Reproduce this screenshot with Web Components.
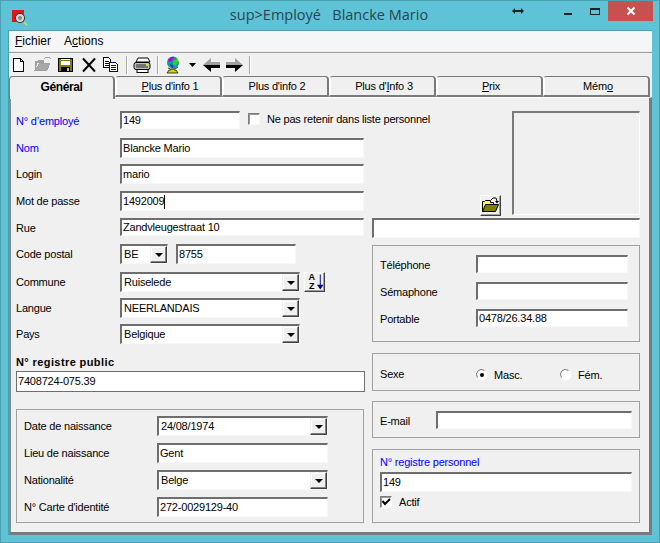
<!DOCTYPE html>
<html>
<head>
<meta charset="utf-8">
<title>sup>Employé</title>
<style>
  html, body { margin: 0; padding: 0; background: #5fc3d8; }
  body { width: 660px; height: 543px; overflow: hidden; font: 11px "Liberation Sans", Arial, sans-serif; letter-spacing: -0.2px; color: #000; }
</style>
</head>
<body>
<emp-window title-text="sup>Employé   Blancke Mario">
  <menu-bar></menu-bar>
  <tool-bar></tool-bar>
  <tab-strip></tab-strip>
  <form-page>
    <div slot="left" class="grid">
      <form-row label="N° d’employé" blue><win-edit w="120" h="18" value="149"></win-edit><win-check label="Ne pas retenir dans liste personnel"></win-check></form-row>
      <form-row label="Nom" blue><win-edit w="244" value="Blancke Mario"></win-edit></form-row>
      <form-row label="Login"><win-edit w="244" value="mario"></win-edit></form-row>
      <form-row label="Mot de passe"><win-edit w="244" value="1492009" caret></win-edit></form-row>
      <form-row label="Rue"><win-edit w="244" h="18" value="Zandvleugestraat 10"></win-edit></form-row>
      <form-row label="Code postal"><win-combo w="48" value="BE"></win-combo><win-edit w="120" value="8755"></win-edit></form-row>
      <form-row label="Commune"><win-combo w="180" value="Ruiselede"></win-combo><sort-button></sort-button></form-row>
      <form-row label="Langue"><win-combo w="180" value="NEERLANDAIS"></win-combo></form-row>
      <form-row label="Pays"><win-combo w="180" value="Belgique"></win-combo></form-row>
    </div>
    <public-number slot="left" label="N° registre public" value="7408724-075.39"></public-number>
    <group-box slot="left" class="birth" pad="6px 0 6px 7px">
      <form-row label="Date de naissance" lw="133" wide><win-combo w="171" value="24/08/1974"></win-combo></form-row>
      <form-row label="Lieu de naissance" lw="133" wide><win-edit w="171" value="Gent"></win-edit></form-row>
      <form-row label="Nationalité" lw="133" wide><win-combo w="171" value="Belge"></win-combo></form-row>
      <form-row label="N° Carte d'identité" lw="133" wide><win-edit w="171" value="272-0029129-40"></win-edit></form-row>
    </group-box>

    <photo-box slot="right"></photo-box>
    <win-edit slot="right" w="268" h="20"></win-edit>
    <group-box slot="right" pad="9px 0 0 7px" h="97" top="7">
      <form-row label="Téléphone" lw="96" wide><win-edit w="152" h="18"></win-edit></form-row>
      <form-row label="Sémaphone" lw="96" wide><win-edit w="152" h="18"></win-edit></form-row>
      <form-row label="Portable" lw="96" wide><win-edit w="152" h="18" value="0478/26.34.88"></win-edit></form-row>
    </group-box>
    <group-box slot="right" pad="10px 0 0 7px" h="38" top="11">
      <form-row label="Sexe" lw="96" wide><win-radio label="Masc." checked></win-radio><win-radio label="Fém."></win-radio></form-row>
    </group-box>
    <group-box slot="right" pad="9px 0 0 7px" h="37" top="10">
      <form-row label="E-mail" lw="56" wide><win-edit w="196" h="18"></win-edit></form-row>
    </group-box>
    <group-box slot="right" pad="6px 0 0 7px" h="74" top="11">
      <staff-number label="N° registre personnel" value="149"></staff-number>
    </group-box>
  </form-page>
</emp-window>

<script>
// small helper, every element just sets its shadow html once
class Base extends HTMLElement {
  render(html) {
    const root = this.attachShadow({ mode: "open" });
    const template = document.createElement("template");
    template.innerHTML = html;
    root.appendChild(template.content.cloneNode(true));
  }
}

class EmpWindow extends Base {
  connectedCallback() {
    this.render(`
      <style>
        :host { display: block; width: 660px; height: 543px; box-sizing: border-box; border: 1px solid #4d9fb2; background: #5fc3d8; }
        .title { height: 29px; display: flex; align-items: flex-start; position: relative; }
        .icon { margin: 9px 0 0 11px; width: 16px; height: 16px; }
        .text { position: absolute; left: 0; right: 0; top: 4px; text-align: center; font: 14.5px "Open Sans", "Noto Sans", sans-serif; letter-spacing: 0; color: #2a4450; white-space: pre; padding-right: 2px; }
        .cursor { position: absolute; left: 511px; top: 5px; }
        .caps { margin-left: auto; margin-right: 6px; display: flex; }
        .caps svg { display: block; }
        .close { width: 45px; height: 20px; background: #c75050; display: flex; align-items: center; justify-content: center; }
        .client { margin: 0 7px; height: 505px; box-sizing: border-box; background: #f0f0f0; display: flex; flex-direction: column; border-top: 1px solid #4d9fb2; border-left: 1px solid #4d9fb2; }
      </style>
      <div class="title">
        <svg class="icon" viewBox="0 0 16 16" shape-rendering="crispEdges">
          <rect x="0" y="0" width="12" height="12" fill="#e01818"/>
          <circle cx="8" cy="8" r="4.6" fill="#d8d8d8" stroke="#333" shape-rendering="auto"/>
          <circle cx="8" cy="8" r="2" fill="#888" shape-rendering="auto"/>
          <path d="M12 12l3 3" stroke="#dddd44" stroke-width="1.5" shape-rendering="auto"/>
        </svg>
        <div class="text">${this.getAttribute("title-text")}</div>
        <svg class="cursor" width="12" height="10" viewBox="0 0 12 10">
          <path d="M0 5l3-3v2h6V2l3 3-3 3V6H3v2z" fill="#222"/>
        </svg>
        <div class="caps">
          <svg width="45" height="20" shape-rendering="crispEdges">
            <rect x="1" y="12" width="8" height="2" fill="#222"/>
            <rect x="27.5" y="7.500" width="9" height="6" fill="none" stroke="#222"/>
            <rect x="27" y="7" width="10" height="2" fill="#222"/>
          </svg>
          <div class="close">
            <svg width="10" height="10" viewBox="0 0 10 10"><path d="M1.500 1.500l7 7M8.500 1.500l-7 7" stroke="#fff" stroke-width="2"/></svg>
          </div>
        </div>
      </div>
      <div class="client"><slot></slot></div>
    `);
  }
}

class MenuBar extends Base {
  connectedCallback() {
    this.render(`
      <style>
        :host { display: flex; height: 20px; padding: 0 0 0 6px; gap: 13px; background: #f5f6f7; align-items: center; font: 12px "Liberation Sans", sans-serif; letter-spacing: 0; border-bottom: 1px solid #e8e8e8; box-shadow: 0 1px 0 #a0a0a0; margin-bottom: 1px; }
        u { text-decoration-thickness: 1px; text-underline-offset: 1px; }
      </style>
      <span><u>F</u>ichier</span><span>A<u>c</u>tions</span>
    `);
  }
}

class ToolBar extends Base {
  connectedCallback() {
    this.render(`
      <style>
        :host { display: block; height: 23px; background: #f0f0f0; }
        svg { display: block; }
      </style>
      <svg width="244" height="23" viewBox="0 0 244 23" shape-rendering="crispEdges">
        <!-- new -->
        <path d="M4.500 5.500h7l3 3v10h-10z" fill="#fff" stroke="#000"/><path d="M11.500 5.500v3h3" fill="none" stroke="#000"/>
        <!-- open, disabled -->
        <path d="M26 17v-9h3l1-1h4v2h-6l-2 8h12l3-7H30" fill="#a8a8a8" stroke="#a0a0a0"/>
        <path d="M35 6l2-2h3l2 2" fill="none" stroke="#a0a0a0"/>
        <!-- save -->
        <rect x="49.500" y="5.500" width="14" height="13" fill="#808000" stroke="#000"/>
        <rect x="52" y="6" width="9" height="6" fill="#fff"/><rect x="52" y="7" width="9" height="1" fill="#808000"/>
        <rect x="52" y="14" width="9" height="4" fill="#000"/><rect x="58" y="15" width="2" height="3" fill="#c0c0c0"/>
        <!-- delete -->
        <path d="M74 5.500l12 13M86 5.500l-12 13" stroke="#000" stroke-width="2" shape-rendering="auto"/>
        <!-- copy -->
        <g transform="translate(-1 0)">
          <path d="M95.500 4.500h5l2 2v8h-7z" fill="#fff" stroke="#000"/>
          <path d="M97 8h4M97 10h4M97 12h4" stroke="#000"/>
          <path d="M101.500 9.500h6l2 2v7h-8z" fill="#fff" stroke="#000080"/>
          <path d="M103 12h5M103 14h5M103 16h5" stroke="#000080"/>
        </g>
        <!-- sep -->
        <rect x="117" y="3" width="1" height="18" fill="#a8a8a8"/><rect x="118" y="3" width="1" height="18" fill="#fff"/>
        <!-- print -->
        <g shape-rendering="auto" transform="translate(-1 0)">
          <path d="M130 5h10l2 4h-14z" fill="#fff" stroke="#000"/>
          <rect x="126" y="9.500" width="16" height="7" rx="2" fill="#c0c0c0" stroke="#000"/>
          <path d="M128 12h10M128 14h12" stroke="#000" stroke-width=".8"/>
          <rect x="129" y="16.500" width="11" height="3" fill="#fff" stroke="#000"/>
          <rect x="138" y="11" width="2" height="1.500" fill="#e8e800"/>
        </g>
        <!-- sep -->
        <rect x="148" y="3" width="1" height="18" fill="#a8a8a8"/><rect x="149" y="3" width="1" height="18" fill="#fff"/>
        <!-- globe -->
        <g shape-rendering="auto" transform="translate(-3 0)">
          <path d="M161 20h11l-2-3h-7z" fill="#e0d000" stroke="#000" stroke-width=".7"/>
          <rect x="165" y="15" width="3" height="3" fill="#e8e000"/>
          <circle cx="167" cy="9.500" r="6" fill="#00a0a0"/>
          <path d="M162 7q3-4 6-3l-2 4-3 1z" fill="#c000c0"/>
          <path d="M167 8l4-2 1 4-3 3-2-2z" fill="#30d030"/>
          <path d="M164 11l3 1 0 3-2-1z" fill="#3030e0"/>
          <path d="M171 5l2 4" stroke="#e8e000" stroke-width="1"/>
          <path d="M162 15q5 3 10-1" fill="none" stroke="#000" stroke-width=".8"/>
        </g>
        <path d="M180 10h7l-3.500 4z" fill="#000" shape-rendering="auto"/>
        <!-- back -->
        <path d="M194 12l8-7v4h9v3z" fill="#a0a0a0" shape-rendering="auto"/>
        <path d="M194 12l8 7v-4h9v-3z" fill="#000" shape-rendering="auto"/>
        <!-- forward -->
        <path d="M234 12l-8-7v4h-9v3z" fill="#a0a0a0" shape-rendering="auto"/>
        <path d="M234 12l-8 7v-4h-9v-3z" fill="#000" shape-rendering="auto"/>
        <!-- sep -->
        <rect x="240" y="3" width="1" height="18" fill="#a8a8a8"/><rect x="241" y="3" width="1" height="18" fill="#fff"/>
      </svg>
    `);
  }
}

class TabStrip extends Base {
  connectedCallback() {
    this.render(`
      <style>
        :host { display: flex; height: 21px; position: relative; z-index: 1; }
        .tab { width: 107px; box-sizing: border-box; height: 21px; padding-left: 4px; background: #f0f0f0; border: 1px solid #7a7a7a; border-width: 1px 2px 2px 1px; border-left-color: #fff; border-radius: 4px 4px 0 0; text-align: center; line-height: 18px; box-shadow: inset 1px 0 0 #fff; }
        .tab.on { width: 106px; height: 23px; padding-left: 0; font-size: 12px; letter-spacing: -0.4px; font-weight: bold; border-bottom: 0; border-left: 1px solid #7a7a7a; line-height: 20px; position: relative; z-index: 2; }
        u { text-underline-offset: 1px; }
      </style>
      <div class="tab on">Général</div>
      <div class="tab"><u>P</u>lus d'info 1</div>
      <div class="tab">Plus d'info 2</div>
      <div class="tab">Plus d'<u>I</u>nfo 3</div>
      <div class="tab"><u>P</u>rix</div>
      <div class="tab">Mém<u>o</u></div>
    `);
  }
}

class FormPage extends Base {
  connectedCallback() {
    this.render(`
      <style>
        :host { display: flex; flex: 1; box-sizing: border-box; gap: 8px; padding: 13px 0 0 5px; background: #f0f0f0; border-top: 1px solid #fff; border-right: 3px solid #7a7a7a; border-bottom: 3px solid #7a7a7a; border-left: 2px solid #8a8a8a; }
        .col { display: flex; flex-direction: column; width: 348px; }
        .col.r { width: 268px; }
        ::slotted(.grid) { display: grid; grid-template-rows: 27px 26px 27px 27px 26px 28px 26px 26px 26px; }
        ::slotted(.birth) { margin-top: 17px; height: 114px; }
      </style>
      <div class="col"><slot name="left"></slot></div>
      <div class="col r"><slot name="right"></slot></div>
    `);
  }
}

class FormRow extends Base {
  connectedCallback() {
    const wide = this.hasAttribute("wide");
    const lw = this.getAttribute("lw") || 104;
    const blue = this.hasAttribute("blue");
    this.render(`
      <style>
        :host { display: flex; align-items: flex-start; gap: ${wide ? 0 : 8}px; ${wide ? "height:27px;" : ""} }
        .label { width: ${lw}px; flex: none; padding-top: 4px; color: ${blue ? "#0000ff" : "#000"}; white-space: nowrap; margin-right: ${wide ? 0 : -8}px; }
      </style>
      <div class="label">${this.getAttribute("label")}</div>
      <slot></slot>
    `);
  }
}

class WinEdit extends Base {
  connectedCallback() {
    const w = this.getAttribute("w");
    const h = this.getAttribute("h") || 20;
    const value = this.getAttribute("value") || "";
    this.render(`
      <style>
        :host { display: block; flex: none; width: ${w}px; height: ${h}px; box-sizing: border-box; background: #fff; border: 2px solid #6e6e6e; border-right: 1px solid #f8f8f8; border-bottom: 1px solid #f8f8f8; padding: 0 0 0 1px; line-height: ${h - 4}px; white-space: nowrap; }
        i { display: inline-block; width: 1px; height: 14px; background: #000; vertical-align: middle; }
      </style>
      ${value}${this.hasAttribute("caret") ? "<i></i>" : ""}
    `);
  }
}

class WinCombo extends Base {
  connectedCallback() {
    this.render(`
      <style>
        :host { display: flex; flex: none; width: ${this.getAttribute("w")}px; height: 20px; box-sizing: border-box; background: #fff; border: 2px solid #6e6e6e; border-right: 1px solid #f8f8f8; border-bottom: 1px solid #f8f8f8; }
        .v { flex: 1; padding-left: 2px; line-height: 17px; white-space: nowrap; }
        .b { width: 17px; height: 17px; box-sizing: border-box; background: #f0f0f0; border: 1px solid; border-color: #f0f0f0 #404040 #404040 #f0f0f0; box-shadow: inset -1px -1px 0 #808080, inset 1px 1px 0 #fff; display: flex; align-items: center; justify-content: center; }
        .b span { width: 0; height: 0; border: 4px solid transparent; border-top-color: #000; border-bottom: 0; margin-top: 1px; }
      </style>
      <div class="v">${this.getAttribute("value")}</div>
      <div class="b"><span></span></div>
    `);
  }
}

class WinCheck extends Base {
  connectedCallback() {
    this.render(`
      <style>
        :host { display: inline-flex; align-items: center; gap: 7px; height: 14px; margin: 1px 0 0 0; white-space: nowrap; }
        .box { width: 12px; height: 12px; box-sizing: border-box; background: #fff; border: 1px solid; border-color: #7a7a7a #f8f8f8 #f8f8f8 #7a7a7a; box-shadow: inset 1px 1px 0 #9a9a9a; display: block; }
        svg { display: block; }
      </style>
      <span class="box">${this.hasAttribute("checked") ? '<svg width="10" height="10" viewBox="0 0 10 10"><path d="M1.500 4l2.500 3 5-5" fill="none" stroke="#000" stroke-width="2"/></svg>' : ""}</span>
      ${this.getAttribute("label")}
    `);
  }
}

class WinRadio extends Base {
  connectedCallback() {
    const on = this.hasAttribute("checked");
    this.render(`
      <style>
        :host { display: inline-flex; flex: none; align-items: center; gap: 6px; width: 84px; height: 14px; margin-top: 4px; }
        svg { display: block; }
      </style>
      <svg width="12" height="12" viewBox="0 0 12 12">
        <circle cx="6" cy="6" r="5.500" fill="#fff"/>
        <path d="M1.500 8.500a5 5 0 0 1 7-7" fill="none" stroke="#777"/>
        ${on ? '<circle cx="6" cy="6" r="2" fill="#000"/>' : ""}
      </svg>
      ${this.getAttribute("label")}
    `);
  }
}

class SortButton extends Base {
  connectedCallback() {
    this.render(`
      <style>
        :host { display: flex; gap: 2px; margin-left: -4px; width: 21px; height: 20px; box-sizing: border-box; padding: 0 0 0 3px; background: #f0f0f0; border: 1px solid; border-color: #fff #404040 #404040 #fff; box-shadow: inset -1px -1px 0 #a0a0a0; }
        .az { display: flex; flex-direction: column; width: 8px; font: bold 9px/9px "Liberation Sans", sans-serif; letter-spacing: 0; text-align: center; }
        svg { display: block; margin-top: 1px; }
      </style>
      <div class="az"><span>A</span><span>Z</span></div>
      <svg width="7" height="17" viewBox="0 0 7 17"><path d="M3 0h1v11h3l-3.500 5-3.500-5h3z" fill="#000080"/></svg>
    `);
  }
}

class GroupBox extends Base {
  connectedCallback() {
    const h = this.getAttribute("h");
    this.render(`
      <style>
        :host { display: block; box-sizing: border-box; border: 1px solid #a0a0a0; padding: ${this.getAttribute("pad") || 0}; ${h ? `height:${h}px;` : ""} ${this.hasAttribute("top") ? `margin-top:${this.getAttribute("top")}px;` : ""} }
      </style>
      <slot></slot>
    `);
  }
}

class PublicNumber extends Base {
  connectedCallback() {
    this.render(`
      <style>
        :host { display: block; margin-top: 5px; }
        .l { font-weight: bold; letter-spacing: 0.4px; height: 16px; line-height: 14px; }
        .v { height: 21px; box-sizing: border-box; width: 349px; border: 1px solid #6e6e6e; background: #fff; line-height: 19px; padding-left: 1px; }
      </style>
      <div class="l">${this.getAttribute("label")}</div>
      <div class="v">${this.getAttribute("value")}</div>
    `);
  }
}

class PhotoBox extends Base {
  connectedCallback() {
    this.render(`
      <style>
        :host { display: flex; justify-content: flex-end; align-items: flex-end; gap: 11px; height: 107px; }
        .btn { width: 21px; height: 21px; box-sizing: border-box; background: #f0f0f0; border: 1px solid; border-color: #fff #404040 #404040 #fff; box-shadow: inset -1px -1px 0 #a0a0a0; margin-bottom: 2px; }
        .pic { width: 128px; height: 104px; box-sizing: border-box; border: 2px solid #7a7a7a; border-right: 1px solid #fff; border-bottom: 1px solid #fff; margin-bottom: 3px; }
        svg { display: block; }
      </style>
      <div class="btn">
        <svg width="19" height="19" viewBox="0 0 19 19">
          <path d="M1.500 15.500v-10h2l1-1h5v2h3v2" fill="#ffff66" stroke="#000"/>
          <path d="M1.500 15.500l3-7h13l-3 7z" fill="#808000" stroke="#000"/>
          <path d="M10 4l2-2h3l1 3" fill="none" stroke="#000"/><path d="M14 5h4l-2 2.500z" fill="#000"/>
        </svg>
      </div>
      <div class="pic"></div>
    `);
  }
}

class StaffNumber extends Base {
  connectedCallback() {
    this.render(`
      <style>
        :host { display: flex; flex-direction: column; }
        .l { color: #0000ff; height: 16px; line-height: 13px; }
        .c { margin-top: 3px; }
      </style>
      <div class="l">${this.getAttribute("label")}</div>
      <win-edit w="252" value="${this.getAttribute("value")}"></win-edit>
      <win-check class="c" label="Actif" checked></win-check>
    `);
  }
}

customElements.define("emp-window", EmpWindow);
customElements.define("menu-bar", MenuBar);
customElements.define("tool-bar", ToolBar);
customElements.define("tab-strip", TabStrip);
customElements.define("form-page", FormPage);
customElements.define("form-row", FormRow);
customElements.define("win-edit", WinEdit);
customElements.define("win-combo", WinCombo);
customElements.define("win-check", WinCheck);
customElements.define("win-radio", WinRadio);
customElements.define("sort-button", SortButton);
customElements.define("group-box", GroupBox);
customElements.define("public-number", PublicNumber);
customElements.define("photo-box", PhotoBox);
customElements.define("staff-number", StaffNumber);
</script>
</body>
</html>
